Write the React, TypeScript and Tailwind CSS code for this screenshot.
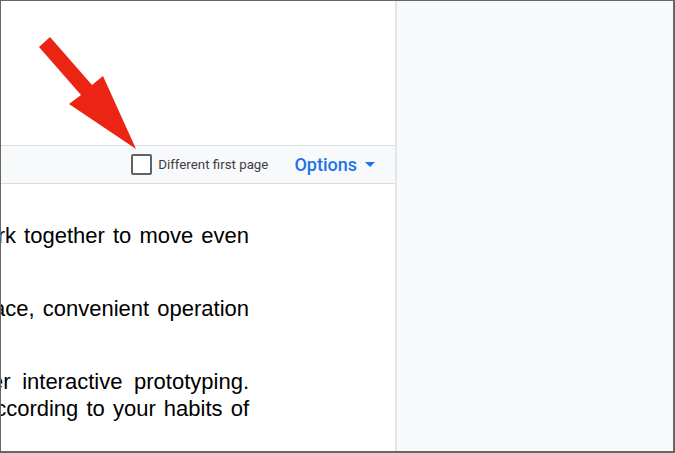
export default function App() {
  const lines = [
    { text: 'work together to move even', spacing: '[word-spacing:2px]' },
    { text: 'space, convenient operation', spacing: '[word-spacing:2px]' },
  ];

  return (
    <div className="w-[675px] h-[453px] overflow-hidden border border-r-2 border-b-2 border-[#666666] flex bg-white font-['Liberation_Sans',Arial,sans-serif]">
      {/* Page */}
      <div className="w-[394px] flex-shrink-0 flex flex-col bg-white">
        {/* Top margin with the annotation arrow */}
        <div className="relative h-[144px] flex-shrink-0">
          <svg className="absolute left-0 top-0" width="160" height="160" viewBox="0 0 160 160">
            <polygon
              points="38,46 49,36 91,84 102,75 135,148 68,103 80,94"
              fill="#ec2414"
            />
          </svg>
        </div>

        {/* Header options bar */}
        <div className="h-[39px] flex-shrink-0 flex items-center justify-end pr-[20px] bg-[#f8f9fa] border-y border-[#dadce0]">
          <div className="w-[21px] h-[21px] border-2 border-[#5f6368] rounded-[2px] bg-white" />
          <span className="ml-[6px] text-[13.3px] text-[#3c4043] font-['Roboto',sans-serif]">Different first page</span>
          <span className="ml-[26px] text-[18px] font-medium text-[#1a73e8] font-['Roboto',sans-serif]">Options</span>
          <svg className="ml-[8px]" width="10" height="5" viewBox="0 0 10 5">
            <polygon points="0,0 10,0 5,5" fill="#1a73e8" />
          </svg>
        </div>

        {/* Body text, clipped at the left edge */}
        <div className="flex-1 overflow-hidden pt-[38px] flex flex-col gap-[46px] text-[22px] leading-[27px] text-black">
          {lines.map(l => (
            <div key={l.text} className="w-[248px] flex justify-end">
              <span className={`whitespace-nowrap ${l.spacing}`}>{l.text}</span>
            </div>
          ))}
          <div className="flex flex-col">
            <div className="w-[248px] flex justify-end">
              <span className="whitespace-nowrap [word-spacing:5.5px]">smoother interactive prototyping.</span>
            </div>
            <div className="w-[248px] flex justify-end">
              <span className="whitespace-nowrap [word-spacing:2px]">according to your habits of</span>
            </div>
          </div>
        </div>
      </div>

      {/* Page edge */}
      <div className="w-[2px] flex-shrink-0 bg-[#e4e5e7]" />

      {/* Canvas background */}
      <div className="flex-1 bg-[#f8f9fa]" />
    </div>
  );
}
